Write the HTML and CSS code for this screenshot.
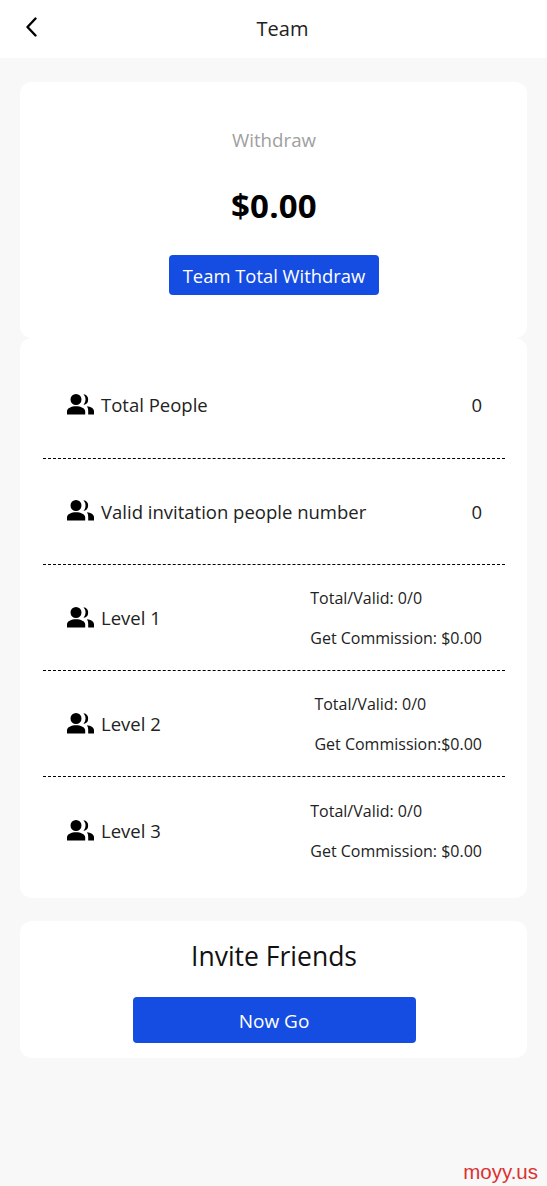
FILE: index.html
```html
<!DOCTYPE html>
<html lang="en">
<head>
<meta charset="utf-8">
<title>Team</title>
<link rel="stylesheet" href="styles.css">
</head>
<body>
<svg class="defs" width="0" height="0" aria-hidden="true"><symbol id="people" viewBox="0 0 27 22"><path d="M9 1a5.500 5.500 0 1 1 0 11A5.500 5.500 0 0 1 9 1zM9 13.200c4.500 0 9.200 2 9.200 5.100V21.500H0V18.300C0 15.200 4.500 13.200 9 13.200zM16.500 1.200a5.400 5.400 0 0 1 0 10.700A8 8 0 0 0 16.500 1.200zM20 13.300c3.700.5 7 2.100 7 5v3.200H21.200V18.300c0-2-.3-3.500-1.200-5z"/></symbol></svg>
<header class="topbar">
  <svg class="back" viewBox="0 0 12 20" width="12" height="20"><path d="M10.500 1.500 2.500 10 10.500 18.500" fill="none" stroke="#000" stroke-width="2.400" stroke-linecap="round" stroke-linejoin="round"/></svg>
  <h1 class="title">Team</h1>
</header>
<main class="content">
  <section class="card summary">
    <div class="label">Withdraw</div>
    <div class="amount">$0.00</div>
    <button class="btn btn-small">Team Total Withdraw</button>
  </section>
  <section class="card stats">
    <div class="row">
      <div class="name"><svg class="icon"><use href="#people"/></svg>Total People</div>
      <div class="value">0</div>
    </div>
    <div class="row">
      <div class="name"><svg class="icon"><use href="#people"/></svg>Valid invitation people number</div>
      <div class="value">0</div>
    </div>
    <div class="row">
      <div class="name"><svg class="icon"><use href="#people"/></svg>Level 1</div>
      <div class="detail"><p>Total/Valid: 0/0</p><p>Get Commission: $0.00</p></div>
    </div>
    <div class="row">
      <div class="name"><svg class="icon"><use href="#people"/></svg>Level 2</div>
      <div class="detail"><p>Total/Valid: 0/0</p><p>Get Commission:$0.00</p></div>
    </div>
    <div class="row">
      <div class="name"><svg class="icon"><use href="#people"/></svg>Level 3</div>
      <div class="detail"><p>Total/Valid: 0/0</p><p>Get Commission: $0.00</p></div>
    </div>
  </section>
  <section class="card invite">
    <h2 class="invite-title">Invite Friends</h2>
    <button class="btn btn-wide">Now Go</button>
  </section>
</main>
<div class="watermark">moyy.us</div>
</body>
</html>
```
FILE: styles.css
```css
* { box-sizing: border-box; }
html, body { margin: 0; height: 100%; }
body {
  background: #f8f8f8;
  font-family: "Open Sans", "Noto Sans", sans-serif;
  color: #222;
  overflow: hidden;
  position: relative;
}
.defs { position: absolute; }
.topbar {
  height: 58px;
  background: #fff;
  display: flex;
  align-items: center;
  justify-content: center;
  padding-left: 18px;
  position: relative;
}
.back { position: absolute; left: 25px; top: 17px; }
.title { margin: 0; font-size: 20px; font-weight: 400; line-height: 28px; color: #222; }
.content { padding: 24px 20px 0; }
.card { background: #fff; border-radius: 12px; }
.summary {
  height: 256px;
  padding: 44px 0 0 1px;
  display: flex;
  flex-direction: column;
  align-items: center;
}
.label { font-size: 18.700px; line-height: 28px; color: #a0a0a0; }
.amount { margin-top: 31px; font-size: 33px; line-height: 42px; font-weight: 700; color: #000; letter-spacing: .2px; }
.btn {
  border: 0;
  background: #154de3;
  color: #fff;
  font-family: inherit;
  border-radius: 4px;
  display: block;
  padding: 0;
}
.btn-small { margin-top: 28px; width: 210px; height: 40px; font-size: 18.400px; }
.stats { height: 560px; padding: 14.300px 22px 0 23px; }
.row {
  height: 106.300px;
  padding: 0 23px 0 24px;
  display: flex;
  align-items: center;
  justify-content: space-between;
  border-bottom: 1px dashed #000;
}
.row:last-child { border-bottom: 0; }
.name { display: flex; align-items: center; font-size: 18.500px; color: #222; }
.icon { width: 27px; height: 22px; margin-right: 7px; margin-top: -2px; fill: #000; }
.value { font-size: 18.500px; color: #222; }
.detail { font-size: 16px; color: #222; }
.detail p { margin: 0; line-height: 20px; }
.detail p + p { margin-top: 20px; }
.invite {
  margin-top: 23px;
  height: 137px;
  padding: 17px 0 0 1px;
  display: flex;
  flex-direction: column;
  align-items: center;
}
.invite-title { margin: 0; font-size: 26.500px; line-height: 36px; font-weight: 400; color: #111; }
.btn-wide { margin-top: 23px; width: 283px; height: 46px; padding-top: 2px; font-size: 19px; }
.watermark {
  position: absolute;
  right: 9px;
  bottom: 3px;
  font-family: "Liberation Sans", sans-serif;
  font-size: 20.500px;
  line-height: 22px;
  color: #dc3232;
}
```
